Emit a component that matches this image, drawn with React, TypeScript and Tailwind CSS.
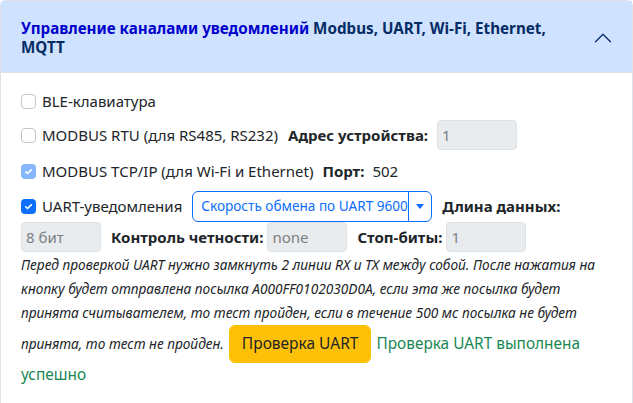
import React from "react";

const font = { fontFamily: '"Noto Sans", "Open Sans", sans-serif' };

function Check({ checked, disabled }: { checked?: boolean; disabled?: boolean }) {
  if (!checked) {
    return <span className="inline-block w-[15px] h-[15px] rounded-[4px] border border-[#c4c7ca] bg-white shrink-0" />;
  }
  return (
    <span
      className={
        "inline-flex items-center justify-center w-[15px] h-[15px] rounded-[4px] shrink-0 " +
        (disabled ? "bg-[#86b7fe]" : "bg-[#0d6efd]")
      }
    >
      <svg width="11" height="11" viewBox="0 0 20 20">
        <path d="M5 10.5l3.2 3.2L15 7" fill="none" stroke="#fff" strokeWidth="3" strokeLinecap="round" strokeLinejoin="round" />
      </svg>
    </span>
  );
}

function Field({ value }: { value: string }) {
  return (
    <div className="w-[80px] h-[30px] rounded-[4px] border border-[#dee2e6] bg-[#e9ecef] flex items-center pl-[4px] text-[15px] text-[#7a7f84]">
      {value}
    </div>
  );
}

export default function App() {
  return (
    <div className="w-[633px] h-[403px] overflow-hidden bg-white text-[#212529]" style={font}>
      <div className="border border-[#dee2e6] rounded-t-[6px] h-[420px]">
        <div className="h-[72px] bg-[#cfe2ff] flex items-center pl-5 pr-[19px] shadow-[inset_0_-1px_0_#dee2e6]">
          <div className="font-bold text-[15.2px] leading-[19px] text-[#052c65] pt-[1px]">
            <div>
              <span className="text-[#0000cd]">Управление каналами уведомлений</span> Modbus, UART, Wi-Fi, Ethernet,
            </div>
            <div>MQTT</div>
          </div>
          <svg className="ml-auto shrink-0 mt-[2px]" width="20" height="20" viewBox="0 0 16 16" fill="none" stroke="#052c65" strokeLinecap="round" strokeLinejoin="round">
            <path d="M2 11L8 5L14 11" />
          </svg>
        </div>
        <div className="px-5 pt-4 text-[15px]">
          <div className="h-6 flex items-center gap-[6px]">
            <Check />
            <span>BLE-клавиатура</span>
          </div>
          <div className="mt-[7px] h-[30px] flex items-center">
            <Check />
            <span className="ml-[6px]">MODBUS RTU (для RS485, RS232)</span>
            <span className="ml-[10px] font-bold">Адрес устройства:</span>
            <span className="ml-[9px]"><Field value="1" /></span>
          </div>
          <div className="mt-[9px] h-6 flex items-center">
            <Check checked disabled />
            <span className="ml-[6px]">MODBUS TCP/IP (для Wi-Fi и Ethernet)</span>
            <span className="ml-[9px] font-bold">Порт:</span>
            <span className="ml-[8px]">502</span>
          </div>
          <div className="mt-[8px] h-[30px] flex items-center">
            <Check checked />
            <span className="ml-[6px]">UART-уведомления</span>
            <div className="ml-[10px] h-[31px] w-[240px] shrink-0 flex rounded-[6px] border border-[#0d6efd] text-[#0d6efd] text-[13.6px] whitespace-nowrap">
              <div className="flex-1 flex items-center pl-[8px]">Скорость обмена по UART 9600</div>
              <div className="w-[23px] border-l border-[#0d6efd] flex items-center justify-center">
                <svg width="8" height="5" viewBox="0 0 8 5"><path d="M0 0h8L4 5z" fill="#0d6efd" /></svg>
              </div>
            </div>
            <span className="ml-[10px] font-bold whitespace-nowrap">Длина данных:</span>
          </div>
          <div className="mt-[1px] h-[30px] flex items-center">
            <Field value="8 бит" />
            <span className="ml-[10px] font-bold">Контроль четности:</span>
            <span className="ml-[4px]"><Field value="none" /></span>
            <span className="ml-[10px] font-bold">Стоп-биты:</span>
            <span className="ml-[4px]"><Field value="1" /></span>
          </div>
          <div className="mt-[1px] italic text-[13.7px] leading-[24px] text-[#212529] whitespace-nowrap">
            <div>Перед проверкой UART нужно замкнуть 2 линии RX и TX между собой. После нажатия на</div>
            <div>кнопку будет отправлена посылка A000FF0102030D0A, если эта же посылка будет</div>
            <div>принята считывателем, то тест пройден, если в течение 500 мс посылка не будет</div>
          </div>
          <div className="flex items-center h-[38px] whitespace-nowrap">
            <span className="italic text-[13.7px]">принята, то тест не пройден.</span>
            <button className="ml-[5px] h-[38px] px-3 rounded-[6px] bg-[#ffc107] text-[15.5px] text-[#212529] border border-[#ffc107]">Проверка UART</button>
            <span className="ml-[5px] text-[15.4px] text-[#198754]">Проверка UART выполнена</span>
          </div>
          <div className="h-[24px] flex items-center text-[15.4px] text-[#198754]">успешно</div>
        </div>
      </div>
    </div>
  );
}
